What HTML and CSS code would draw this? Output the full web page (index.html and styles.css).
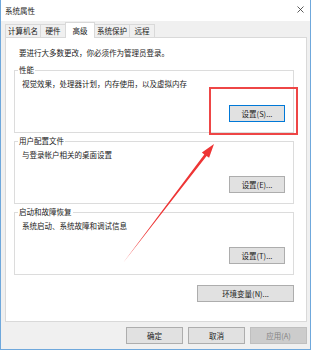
FILE: index.html
```html
<!DOCTYPE html>
<html>
<head>
  <meta charset="UTF-8">
  <title>系统属性</title>
  <link rel="stylesheet" href="styles.css">
</head>
<body>
  <div class="window">
    <div class="titlebar">
      <span class="title">系统属性</span>
      <svg class="close" width="7" height="7" viewBox="0 0 7 7">
        <path d="M0.5 0.5 L6.5 6.5 M6.5 0.5 L0.5 6.5" stroke="#333" stroke-width="0.8" fill="none"/>
      </svg>
    </div>

    <div class="content">
      <div class="tabs">
        <div class="tab">计算机名</div>
        <div class="tab">硬件</div>
        <div class="tab active">高级</div>
        <div class="tab">系统保护</div>
        <div class="tab">远程</div>
      </div>

      <div class="panel">
        <p class="note">要进行大多数更改，你必须作为管理员登录。</p>

        <div class="group">
          <span class="group-title">性能</span>
          <p class="group-text">视觉效果，处理器计划，内存使用，以及虚拟内存</p>
          <button class="btn default">设置(S)...</button>
        </div>

        <div class="group">
          <span class="group-title">用户配置文件</span>
          <p class="group-text">与登录帐户相关的桌面设置</p>
          <button class="btn">设置(E)...</button>
        </div>

        <div class="group">
          <span class="group-title">启动和故障恢复</span>
          <p class="group-text">系统启动、系统故障和调试信息</p>
          <button class="btn">设置(T)...</button>
        </div>

        <div class="env-row">
          <button class="btn wide">环境变量(N)...</button>
        </div>
      </div>

      <div class="actions">
        <button class="btn">确定</button>
        <button class="btn">取消</button>
        <button class="btn" disabled>应用(A)</button>
      </div>
    </div>

    <!-- annotation overlay -->
    <div class="mark"></div>
    <svg class="arrow" width="311" height="350" viewBox="0 0 311 350">
      <polygon points="123,263 204.3,154.5 201.9,152.4 214,144 209.1,157.8 206.6,155.9" fill="#ee3535"/>
    </svg>
  </div>
</body>
</html>
```

FILE: styles.css
```css
* { box-sizing: border-box; }
body { margin: 0; font-family: "Noto Sans CJK SC", "Noto Sans", sans-serif; font-size: 7.5px; color: #1a1a1a; }
p { margin: 0; }

.window {
  position: relative;
  width: 311px; height: 350px;
  background: #f0f0f0;
  border: 1px solid #6fa8dc; border-top: none;
}

.titlebar {
  height: 21px; background: #fff;
  display: flex; align-items: center; justify-content: space-between;
  padding: 0 6px 1px 4px;
}
.close { display: block; margin-top: -1px; }

.content { padding: 0 3px 0 4px; }

.tabs { display: flex; height: 16px; align-items: flex-end; }
.tab {
  height: 13px; min-width: 26px; padding: 0 2px;
  display: flex; align-items: center; justify-content: center;
  background: #f0f0f0; border: 1px solid #d9d9d9; border-bottom: none;
  margin-right: -1px; line-height: 1;
}
.tab.active {
  width: 30px; height: 16px; background: #fff;
  position: relative; z-index: 1; margin-bottom: -1px;
}

.panel {
  height: 285px; background: #fff;
  border: 1px solid #d9d9d9;
  padding: 10px 12px 0 8px;
}
.note { padding-left: 5px; height: 10px; line-height: 10px; }

.group {
  height: 63px; margin-top: 8px;
  border: 1px solid #dcdcdc;
  display: flex; flex-direction: column; align-items: flex-start;
  padding: 0 8px 10px 7px;
}
.note + .group { margin-top: 12px; }
.group-title {
  margin: -6px 0 0 -4px; padding: 0 1px;
  background: #fff; line-height: 10px;
}
.group-text { margin-top: 4px; line-height: 10px; }
.group .btn { margin-top: auto; align-self: flex-end; }

.btn {
  font: inherit; color: #1a1a1a;
  width: 56px; height: 17px; padding: 0;
  background: #e1e1e1; border: 1px solid #adadad;
}
.btn.default { border-color: #0078d7; }
.btn.wide { width: 97px; }
.btn:disabled { background: #cccccc; border-color: #bfbfbf; color: #838383; }

.env-row { display: flex; justify-content: flex-end; margin-top: 10px; }

.actions { display: flex; justify-content: flex-end; gap: 5px; margin-top: 5px; }
.actions .btn { width: 57px; }

.mark {
  position: absolute; left: 208px; top: 87px;
  width: 89px; height: 48px;
  border: 2px solid #ee4646;
}
.arrow { position: absolute; left: -1px; top: 0; pointer-events: none; }
```
